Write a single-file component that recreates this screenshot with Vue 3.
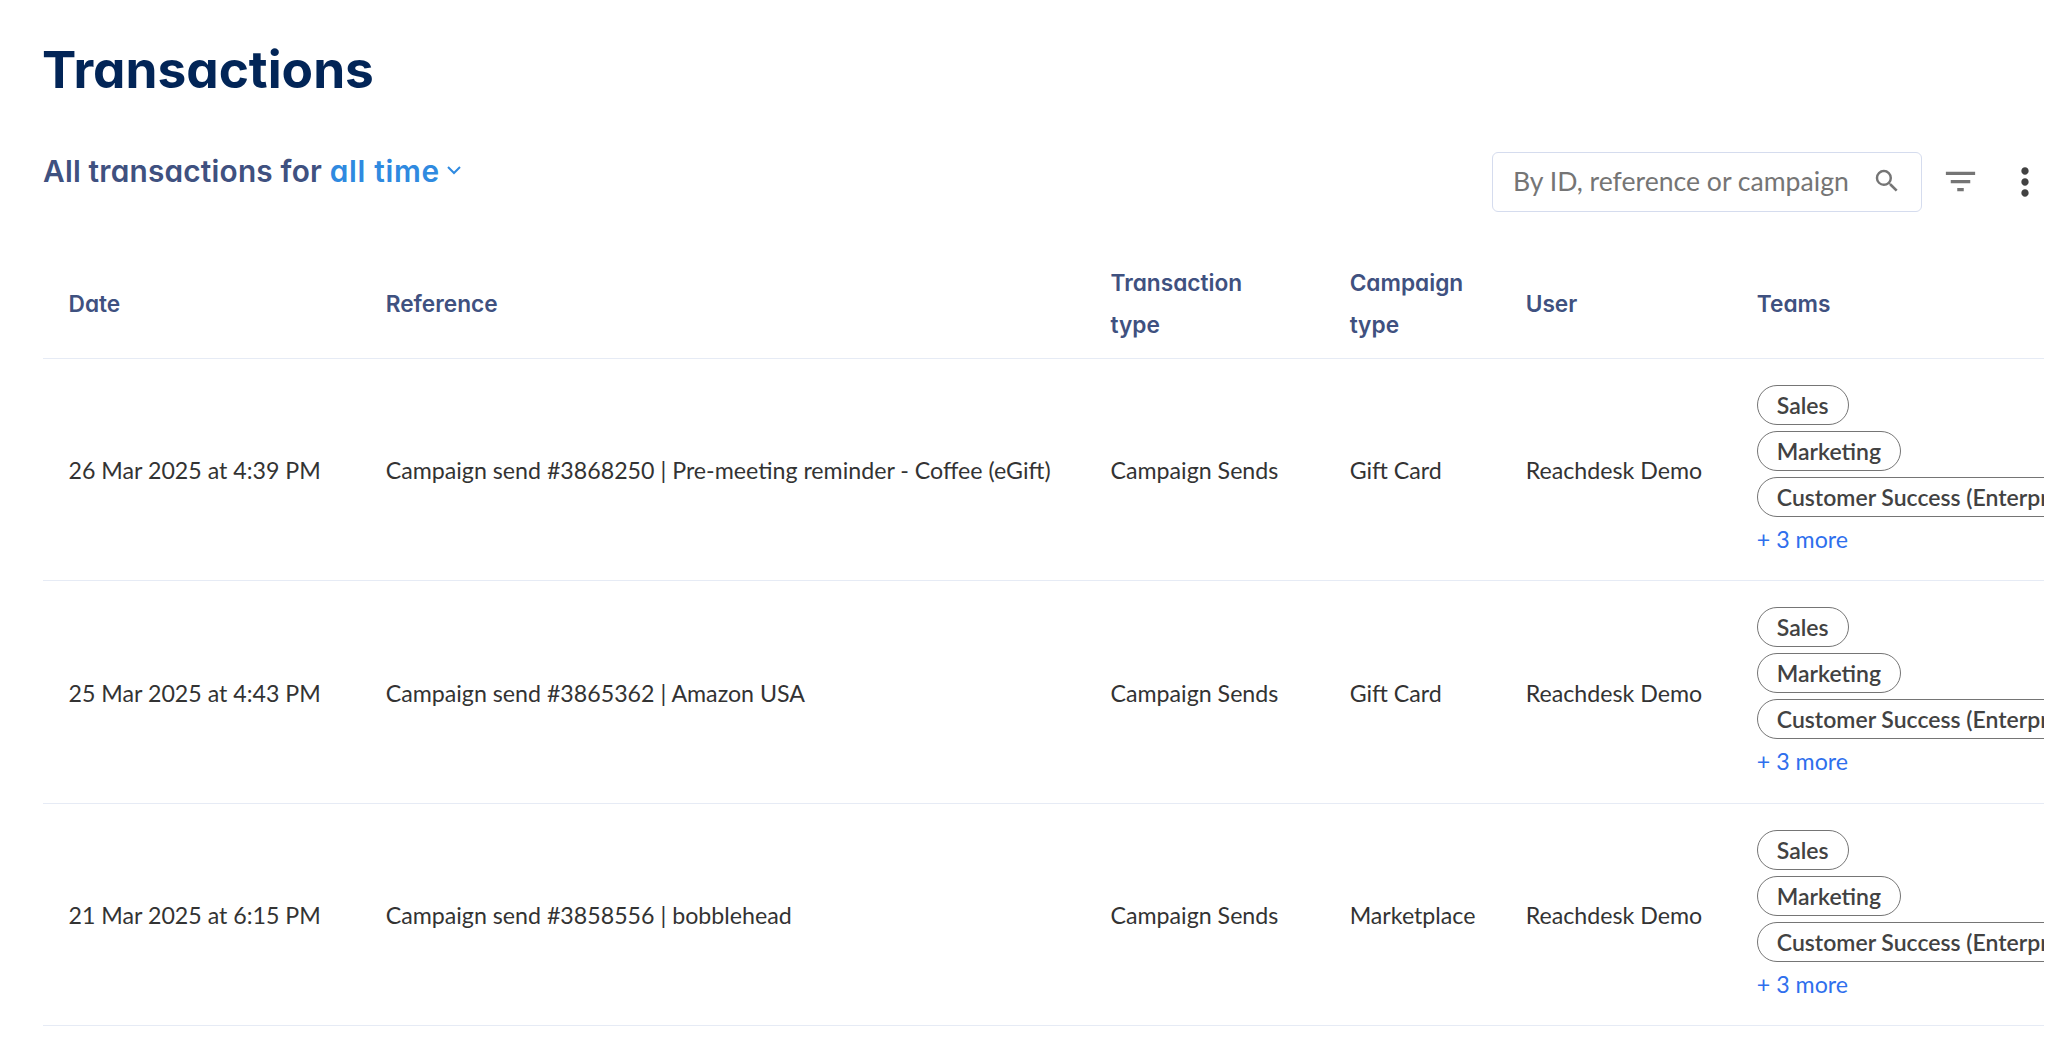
<script setup>
const rows = [
  { date: '26 Mar 2025 at 4:39 PM', ref: 'Campaign send #3868250 | Pre-meeting reminder - Coffee (eGift)', camp: 'Gift Card' },
  { date: '25 Mar 2025 at 4:43 PM', ref: 'Campaign send #3865362 | Amazon USA', camp: 'Gift Card' },
  { date: '21 Mar 2025 at 6:15 PM', ref: 'Campaign send #3858556 | bobblehead', camp: 'Marketplace' },
]
const teams = ['Sales', 'Marketing', 'Customer Success (Enterprise)']
</script>

<template>
  <div class="page">
    <h1 class="title">Transactions</h1>
    <div class="toolbar">
      <div class="subtitle">
        <span>All transactions for <span class="accent">all time</span></span>
        <svg class="chev" width="16" height="10" viewBox="0 0 16 10"><path d="M2 2l6 6 6-6" fill="none" stroke="#2f8ae0" stroke-width="2"/></svg>
      </div>
      <div class="tools">
        <div class="search">
          <span class="placeholder">By ID, reference or campaign</span>
          <svg width="30" height="30" viewBox="0 0 24 24" class="mag"><path fill="#757575" d="M15.5 14h-.79l-.28-.27A6.47 6.47 0 0 0 16 9.5 6.5 6.5 0 1 0 9.5 16c1.61 0 3.09-.59 4.23-1.57l.27.28v.79l5 4.99L20.49 19l-4.99-5zm-6 0C7.01 14 5 11.99 5 9.5S7.01 5 9.5 5 14 7.01 14 9.5 11.99 14 9.5 14z"/></svg>
        </div>
        <svg class="filter" width="39" height="39" viewBox="0 0 24 24"><path fill="#757575" d="M10 18h4v-2h-4v2zM3 6v2h18V6H3zm3 7h12v-2H6v2z"/></svg>
        <svg class="more" width="44" height="44" viewBox="0 0 24 24"><path fill="#424242" d="M12 8c1.1 0 2-.9 2-2s-.9-2-2-2-2 .9-2 2 .9 2 2 2zm0 2c-1.1 0-2 .9-2 2s.9 2 2 2 2-.9 2-2-.9-2-2-2zm0 6c-1.1 0-2 .9-2 2s.9 2 2 2 2-.9 2-2-.9-2-2-2z"/></svg>
      </div>
    </div>
    <div class="table-wrap">
      <table>
        <colgroup>
          <col style="width:317px" /><col style="width:725px" /><col style="width:239px" />
          <col style="width:176px" /><col style="width:231px" /><col style="width:312px" />
        </colgroup>
        <thead>
          <tr>
            <th>Date</th><th>Reference</th><th>Transaction<br />type</th><th>Campaign<br />type</th><th>User</th><th>Teams</th>
          </tr>
        </thead>
        <tbody>
          <tr v-for="r in rows" :key="r.date">
            <td>{{ r.date }}</td>
            <td>{{ r.ref }}</td>
            <td>Campaign Sends</td>
            <td>{{ r.camp }}</td>
            <td>Reachdesk Demo</td>
            <td class="teams">
              <div class="chips">
                <span v-for="t in teams" :key="t" class="chip">{{ t }}</span>
                <a class="more-link">+ 3 more</a>
              </div>
            </td>
          </tr>
        </tbody>
      </table>
    </div>
  </div>
</template>

<style>
html, body { margin: 0; background: #fff; }
</style>

<style scoped>
.page { width: 2044px; height: 1040px; padding: 0 0 0 43px; box-sizing: border-box; overflow: hidden; font-family: Lato, sans-serif; }
.title { margin: 0 0 0 -1px; padding-top: 36px; font: 700 51.4px/66px Inter, sans-serif; font-feature-settings: "cv11"; color: #022557; }
.toolbar { display: flex; justify-content: space-between; align-items: flex-start; margin-top: 50px; height: 101px; }
.subtitle { margin-top: -3px; height: 44px; font: 600 29.8px/40px Inter, sans-serif; font-feature-settings: "cv11"; letter-spacing: 0.2px; color: #3f5180; display: flex; align-items: center; gap: 6px; }
.accent { color: #2f8ae0; letter-spacing: 0.7px; }
.chev { margin-top: -2px; }
.tools { display: flex; align-items: center; margin-right: 3px; }
.search { width: 430px; height: 60px; box-sizing: border-box; border: 1px solid #d5dcee; border-radius: 6px; display: flex; align-items: center; justify-content: space-between; padding: 0 19px 0 20px; }
.placeholder { font-size: 26.6px; color: #757575; white-space: nowrap; margin-top: -2px; }
.mag { margin-top: -3px; }
.filter { margin-left: 18.5px; margin-top: -1px; }
.more { margin-left: 23.5px; margin-right: -6px; margin-top: -1px; }
.table-wrap { width: 2001px; overflow: hidden; }
table { border-collapse: collapse; table-layout: fixed; width: 2001px; }
th { font: 600 22.7px/42px Inter, sans-serif; font-feature-settings: "cv11"; color: #3f5180; text-align: left; padding: 0 0 2px 25px; height: 105px; box-sizing: border-box; border-bottom: 1px solid #e6ebf5; }
td { font-size: 23.2px; color: #333; padding: 2px 0 0 25px; height: 222.6px; box-sizing: border-box; border-bottom: 1px solid #e6ebf5; white-space: nowrap; }
th:nth-child(-n+2), td:nth-child(-n+2) { padding-left: 25.5px; }
.chips { display: flex; flex-direction: column; align-items: flex-start; gap: 6px; margin-top: -2px; }
.chip { display: inline-block; box-sizing: border-box; height: 40px; line-height: 38px; padding: 0 19px; border: 1px solid #757575; border-radius: 20px; font-weight: 600; font-size: 23px; color: #424242; white-space: nowrap; }
.more-link { color: #2f6fed; font-size: 23.2px; line-height: 30px; margin-top: 1px; }
</style>
